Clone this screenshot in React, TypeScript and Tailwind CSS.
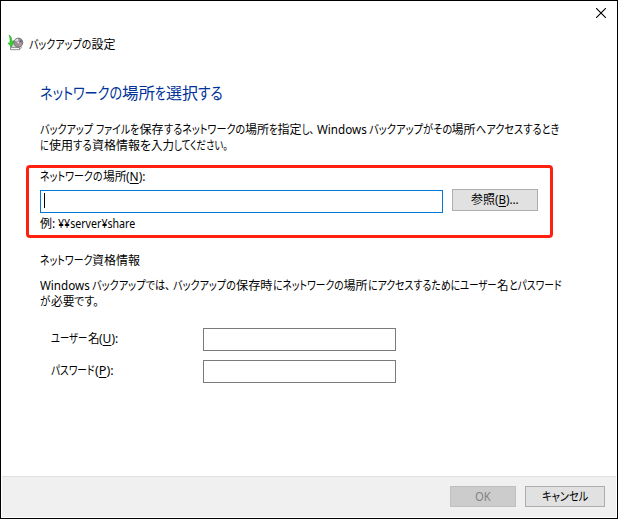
import React, { useLayoutEffect, useRef, useState } from 'react';
import { clsx } from 'clsx';

// [text, width in px, access key underline]
type Run = [string, number, string?];

// Condenses a run of glyphs to the advance width of the dialog font
function FitRun({ text, width, accessKey }: { text: string; width: number; accessKey?: string }) {
  const ref = useRef<HTMLSpanElement>(null);
  const [scale, setScale] = useState(1);

  useLayoutEffect(() => {
    if (ref.current && ref.current.offsetWidth > 0) {
      setScale(width / ref.current.offsetWidth);
    }
  }, [width, text]);

  const [before, after] = accessKey ? text.split(accessKey) : [text, ''];

  return (
    <span className="block shrink-0" style={{ width }}>
      <span
        ref={ref}
        className="inline-block origin-left whitespace-pre"
        style={{ transform: `scaleX(${scale})` }}
      >
        {before}
        {accessKey && <span className="underline underline-offset-2">{accessKey}</span>}
        {after}
      </span>
    </span>
  );
}

function Line({ runs, className = 'h-4 text-[12px] leading-4' }: { runs: Run[]; className?: string }) {
  return (
    <span className={clsx('flex', className)}>
      {runs.map(([text, width, accessKey], index) => (
        <FitRun key={index} text={text} width={width} accessKey={accessKey} />
      ))}
    </span>
  );
}

function BackupIcon() {
  return (
    <svg width="17" height="18" viewBox="0 0 17 18" className="shrink-0">
      <path d="M3.5 11.5 6 8.5h7l1.5 5-1.5 1.8H3.5z" fill="#d5d9db" stroke="#8b9194" strokeWidth=".8" />
      <path d="M3.5 13.5h9v2.2h-9z" fill="#f5f7f7" stroke="#6f7577" strokeWidth=".7" />
      <circle cx="11.3" cy="8.6" r="4.5" fill="#98949a" stroke="#68666c" strokeWidth=".9" />
      <path d="m11.3 8.6-3.6-2a4.1 4.1 0 0 1 3.6-2z" fill="#dedce2" />
      <path d="m11.3 8.6 3.7 2a4.1 4.1 0 0 1-2.4 1.9z" fill="#c98f98" />
      <path d="m11.3 8.6 2.8-3a4 4 0 0 1 1.2 2.5z" fill="#6f6885" />
      <circle cx="11.3" cy="8.6" r="1.3" fill="#f5eff1" stroke="#77666c" strokeWidth=".6" />
      <path d="M2 1c1.8 1 2.8 3 2.9 6.5l2-.8L4.5 13 .9 9l2 .1C3.3 6 3 3.500 2 1z" fill="#39d32f" stroke="#20a51e" strokeWidth=".6" />
    </svg>
  );
}

export default function App() {
  return (
    <div className="flex h-[519px] w-[618px] flex-col border border-black bg-white font-['Noto_Sans','Noto_Sans_CJK_JP',sans-serif] text-black [font-feature-settings:'palt']">
      {/* Title bar */}
      <div className="flex h-[30px] justify-end pr-[11px] pt-[7px]">
        <svg width="10" height="10" viewBox="0 0 10 10">
          <path d="m0 0 10 10m0-10L0 10" stroke="#000" strokeWidth="1.1" />
        </svg>
      </div>
      <header className="flex h-6 items-center pl-[6px]">
        <BackupIcon />
        <Line
          className="ml-[5px] mt-[3px] h-4 text-[12px] leading-4"
          runs={[['バックアップの', 62.5], ['設定', 24]]}
        />
      </header>

      <main className="flex-1 pl-[39px] pt-[26px]">
        <h1>
          <Line
            className="h-6 text-[16px] leading-6 text-[#003399]"
            runs={[['ネットワークの', 82], ['場所', 33], ['を', 11], ['選択', 32], ['する', 25]]}
          />
        </h1>

        <div className="mt-[17px]">
          <Line
            runs={[
              ['バックアップ', 53], ['', 3], ['ファイルを', 43.5], ['保存', 24], ['するネットワークの', 81.5],
              ['場所', 24], ['を', 8.5], ['指定', 24], ['し、', 12], ['', 3], ['Windows', 49.5], ['', 2.5],
              ['バックアップがその', 83], ['場所', 24], ['へアクセスするとき', 83],
            ]}
          />
          <Line
            runs={[['に', 9], ['使用', 24], ['する', 19], ['資格情報', 48], ['を', 11], ['入力', 23], ['してください。', 54]]}
          />
        </div>

        {/* Network location */}
        <section className="-ml-[14px] mt-[11px] h-[73px] w-[527px] rounded-[4px] border-[3px] border-[#ff2010] pl-[11px]">
          <Line
            className="mt-px h-4 text-[12px] leading-4"
            runs={[['ネットワークの', 62.5], ['場所', 23.5], ['(N):', 20, 'N']]}
          />
          <div className="mt-[4px] flex gap-[9px]">
            <div className="mt-px h-[23px] w-[403px] border border-[#0078d7] pl-[3px] pt-[2px]">
              <div className="h-[15px] w-px bg-black" />
            </div>
            <button className="flex h-[22px] w-[86px] items-center justify-center border border-[#adadad] bg-[#e1e1e1]">
              <Line runs={[['参照', 24], ['(B)...', 24, 'B']]} />
            </button>
          </div>
          <Line
            className="mt-[3px] h-4 text-[12px] leading-4"
            runs={[['例:', 15], ['', 3], ['¥¥server¥share', 77]]}
          />
        </section>

        {/* Credentials */}
        <section className="mt-[15px]">
          <Line runs={[['ネットワーク', 52], ['資格情報', 48]]} />
          <div className="mt-[9px]">
            <Line
              runs={[
                ['Windows', 49.5], ['', 2.5], ['バックアップでは、', 78], ['', 3], ['バックアップの', 63], ['保存時', 36.5],
                ['にネットワークの', 71], ['場所', 24], ['にアクセスするために', 92.5], ['ユーザー', 37],
                ['名', 11.5], ['とパスワード', 53],
              ]}
            />
            <Line runs={[['が', 10.5], ['必要', 23.5], ['です。', 25]]} />
          </div>
          <div className="mt-[18px] flex flex-col gap-[9px] pl-[11px]">
            <div className="flex">
              <Line
                className="mt-[3px] h-4 w-[152px] text-[12px] leading-4"
                runs={[['ユーザー', 36.5], ['名', 11.5], ['(U):', 19, 'U']]}
              />
              <div className="h-[23px] w-[193px] border border-[#7a7a7a]" />
            </div>
            <div className="flex">
              <Line
                className="mt-[3px] h-4 w-[152px] text-[12px] leading-4"
                runs={[['パスワード', 43.5], ['(P):', 19, 'P']]}
              />
              <div className="h-[23px] w-[193px] border border-[#7a7a7a]" />
            </div>
          </div>
        </section>
      </main>

      {/* Footer */}
      <footer className="mx-px flex h-[42px] justify-end gap-[9px] border-b border-t border-b-white border-t-[#dfdfdf] bg-[#f0f0f0] pr-[11px] pt-[9px]">
        <button className="flex h-[21px] w-[66px] items-center justify-center border border-[#bfbfbf] bg-[#cccccc] text-[#838383]">
          <Line runs={[['OK', 16]]} />
        </button>
        <button className="flex h-[21px] w-[80px] items-center justify-center border border-[#adadad] bg-[#e1e1e1]">
          <Line runs={[['キャンセル', 46]]} />
        </button>
      </footer>
    </div>
  );
}
